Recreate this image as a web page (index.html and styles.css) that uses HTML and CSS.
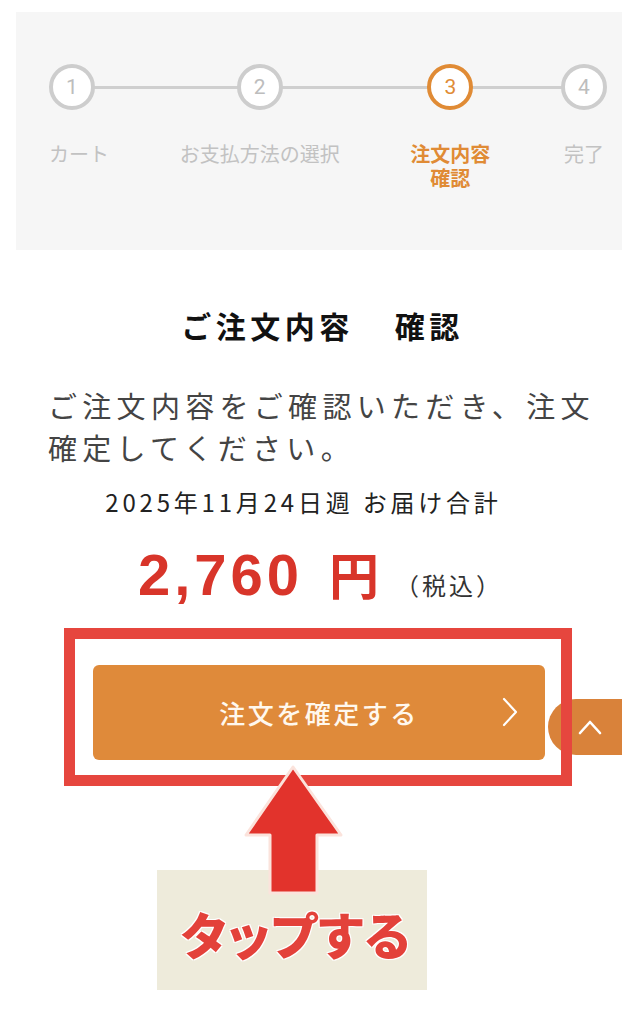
FILE: index.html
```html
<!DOCTYPE html>
<html lang="ja">
<head>
<meta charset="utf-8">
<title>ご注文内容 確認</title>
<link rel="stylesheet" href="styles.css">
</head>
<body>
<div class="page">
  <div class="progress">
    <ol class="steps">
      <li class="step step-first">
        <span class="circle">1</span>
        <span class="label">カート</span>
      </li>
      <li class="step">
        <span class="circle">2</span>
        <span class="label">お支払方法の選択</span>
      </li>
      <li class="step is-active">
        <span class="circle">3</span>
        <span class="label">注文内容<br>確認</span>
      </li>
      <li class="step">
        <span class="circle">4</span>
        <span class="label">完了</span>
      </li>
    </ol>
  </div>

  <h1 class="title">ご注文内容<span class="gap">　</span>確認</h1>
  <p class="lead">ご注文内容をご確認いただき、注文確定してください。</p>
  <p class="date">2025年11月24日週 お届け合計</p>
  <div class="price">
    <span class="amount">2,760</span>
    <span class="yen">円</span>
    <span class="tax">（税込）</span>
  </div>

  <div class="highlight">
    <button class="confirm" type="button">
      <span class="confirm-text">注文を確定する</span>
      <svg class="chev" viewBox="0 0 16 30" width="16" height="30" aria-hidden="true">
        <path d="M2 2 L14 15 L2 28" fill="none" stroke="#fff" stroke-width="2.2" stroke-linecap="round" stroke-linejoin="round"/>
      </svg>
    </button>
  </div>

  <a class="to-top" href="#" aria-label="ページトップへ">
    <svg viewBox="0 0 24 16" width="24" height="16" aria-hidden="true">
      <path d="M2 14 L12 3 L22 14" fill="none" stroke="#fff" stroke-width="2.6" stroke-linecap="round" stroke-linejoin="round"/>
    </svg>
  </a>

  <div class="tap">
    <svg class="arrow" viewBox="0 0 108 134" width="108" height="134" aria-hidden="true">
      <path d="M53 4 L101 72 L77 72 L77 130 L30 130 L30 72 L6 72 Z" fill="#e2332c" stroke="#fbe3dc" stroke-width="3" stroke-linejoin="round"/>
    </svg>
    <div class="tap-label">タップする</div>
  </div>
</div>
</body>
</html>
```

FILE: styles.css
```css
* { box-sizing: border-box; }

html, body {
  margin: 0;
  padding: 0;
  background: #ffffff;
}

body {
  font-family: "Noto Sans CJK JP", "Noto Sans", sans-serif;
  color: #222;
}

.page {
  position: relative;
  width: 641px;
  height: 1024px;
  overflow: hidden;
  padding-top: 12px;
}

/* ---------- progress ---------- */
.progress {
  margin: 0 19px 0 16px;
  height: 238px;
  background: #f6f6f6;
  padding: 52px 15px 0 33px;
}

.steps {
  position: relative;
  list-style: none;
  margin: 0;
  padding: 0;
  display: flex;
  justify-content: space-between;
  align-items: flex-start;
}

.steps::before {
  content: "";
  position: absolute;
  left: 23px;
  right: 23px;
  top: 22px;
  height: 3px;
  background: #cfcfcf;
}

.step {
  display: flex;
  flex-direction: column;
  align-items: center;
}

.step-first {
  align-items: flex-start;
}

.circle {
  position: relative;
  z-index: 1;
  width: 46px;
  height: 46px;
  border: 4px solid #cdcdcd;
  border-radius: 50%;
  background: #fff;
  display: flex;
  align-items: center;
  justify-content: center;
  font-family: Roboto, "Noto Sans", sans-serif;
  font-size: 21px;
  color: #bdbdbd;
}

.label {
  margin-top: 32px;
  font-size: 20px;
  line-height: 24px;
  color: #c2c2c2;
  text-align: center;
  white-space: nowrap;
}

.is-active .circle {
  border-color: #e08b35;
  color: #e08b35;
}

.is-active .label {
  color: #e08b35;
  font-weight: 700;
}

/* ---------- summary ---------- */
.title {
  margin: 55px 0 0;
  padding-left: 4px;
  text-align: center;
  font-size: 30px;
  line-height: 40px;
  font-weight: 700;
  letter-spacing: 4.5px;
  color: #111;
}

.title .gap {
  letter-spacing: 11px;
}

.lead {
  margin: 39px 0 0;
  padding-left: 48px;
  width: 600px;
  font-size: 29px;
  line-height: 42px;
  letter-spacing: 5.3px;
  color: #444;
}

.date {
  margin: 18px 0 0;
  padding-right: 34px;
  text-align: center;
  font-size: 24px;
  line-height: 32px;
  letter-spacing: 3.8px;
  color: #222;
}

.price {
  margin-top: 19px;
  height: 64px;
  display: flex;
  justify-content: center;
  align-items: baseline;
  padding-right: 0;
}

.amount {
  font-family: "Liberation Sans", Arial, sans-serif;
  font-weight: 700;
  font-size: 58px;
  line-height: 64px;
  letter-spacing: 4px;
  color: #d8352a;
}

.yen {
  margin-left: 26px;
  font-weight: 700;
  font-size: 50px;
  color: #d8352a;
}

.tax {
  margin-left: 16px;
  font-size: 24px;
  letter-spacing: 3px;
  color: #333;
}

/* ---------- highlighted button ---------- */
.highlight {
  position: relative;
  z-index: 2;
  margin: 27px 0 0 64px;
  width: 508px;
  height: 158px;
  border: 11px solid #e6463e;
  padding: 26px 16px 15px 18px;
}

.confirm {
  position: relative;
  display: flex;
  align-items: center;
  justify-content: center;
  width: 452px;
  height: 95px;
  border: 0;
  border-radius: 6px;
  background: #df8a3a;
  color: #fff8ee;
  font-family: "Noto Sans CJK JP", sans-serif;
  font-size: 26px;
  font-weight: 500;
  letter-spacing: 2.5px;
  padding: 0;
}

.chev {
  position: absolute;
  right: 27px;
  top: 32px;
}

.to-top {
  position: absolute;
  z-index: 1;
  left: 548px;
  top: 699px;
  width: 74px;
  height: 56px;
  background: #d9823a;
  border-radius: 28px 0 0 28px;
  display: flex;
  align-items: center;
  justify-content: center;
  padding-left: 10px;
}

/* ---------- tap annotation ---------- */
.tap {
  position: relative;
  margin: 84px 0 0 157px;
  width: 270px;
  height: 120px;
}

.arrow {
  position: absolute;
  z-index: 3;
  left: 83px;
  top: -107px;
}

.tap-label {
  width: 270px;
  height: 120px;
  background: #eeebdb;
  display: flex;
  align-items: center;
  justify-content: center;
  padding-top: 6px;
  padding-left: 8px;
  font-size: 50px;
  font-weight: 900;
  font-feature-settings: "palt" 1;
  letter-spacing: 1px;
  color: #e3413a;
  text-shadow: 0 0 2px #fff, 1px 1px 0 #fff, -1px -1px 0 #fff, 1px -1px 0 #fff, -1px 1px 0 #fff;
}
```
